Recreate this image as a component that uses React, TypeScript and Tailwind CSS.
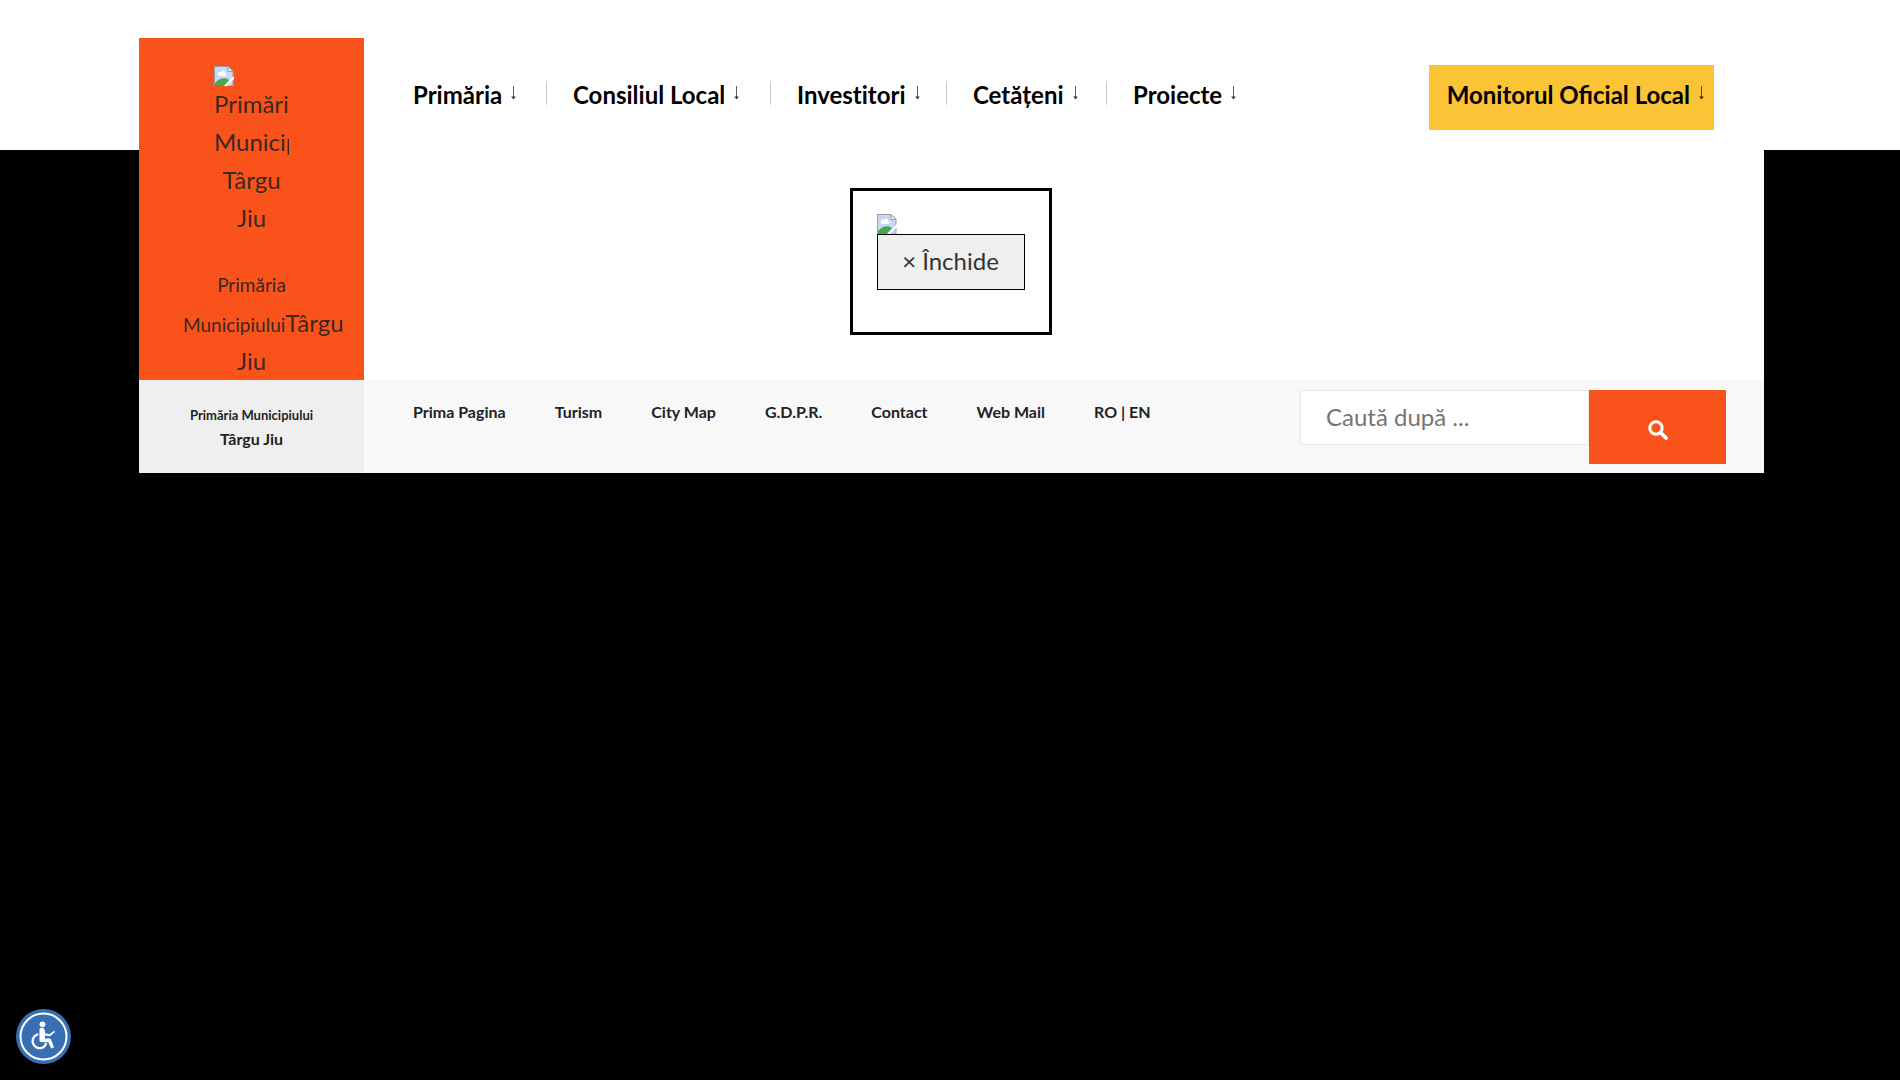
import React from "react";

const mainMenu = [
  { label: "Primăria", width: "w-[133px]" },
  { label: "Consiliul Local", width: "w-[197px]" },
  { label: "Investitori", width: "w-[149px]" },
  { label: "Cetățeni", width: "w-[133px]" },
  { label: "Proiecte", width: "w-[133px]" },
];

const topLinks = ["Prima Pagina", "Turism", "City Map", "G.D.P.R.", "Contact", "Web Mail", "RO | EN"];

const DownArrow = () => (
  <svg className="h-[14px] w-[7px] shrink-0 text-black/70" viewBox="0 0 7 14" fill="none" stroke="currentColor" aria-hidden="true">
    <path d="M3.5 0V12" strokeWidth="0.9" />
    <path d="M1 10.6H6L3.5 13.4Z" fill="currentColor" stroke="none" />
  </svg>
);

// placeholder for a missing image
const BrokenImage = ({ className = "" }) => (
  <svg className={`block h-5 w-5 shrink-0 ${className}`} viewBox="0 0 20 20" aria-hidden="true">
    <path d="M.5 .5H14L19 5.500V20H.5Z" fill="#c6d8f5" stroke="#9a9fa5" strokeWidth="1" />
    <path d="M4 8a2 2 0 0 1 3-2a2 2 0 0 1 4 1a1.500 1.500 0 0 1 0 3H5a1.500 1.500 0 0 1-1-2Z" fill="#fff" />
    <path d="M1 20V17C5 12 11 11 15 14L10 20Z" fill="#4ca64c" />
    <path d="M14 .5V5.500H19Z" fill="#f3f5f8" stroke="#9a9fa5" strokeWidth="1" />
    <path d="M10 20L20 10V13L13 20Z" fill="#fff" />
  </svg>
);

const SearchIcon = () => (
  <svg className="h-5 w-5" viewBox="0 0 20 20" fill="none" stroke="#fff" aria-hidden="true">
    <circle cx="8" cy="8" r="6.2" strokeWidth="3" />
    <path d="M12.500 12.500L18 18" strokeWidth="3.800" strokeLinecap="round" />
  </svg>
);

const AccessibilityButton = () => (
  <button type="button" aria-label="Accesibilitate" className="fixed bottom-4 left-4 h-[55px] w-[55px] cursor-pointer">
    <svg className="h-full w-full" viewBox="0 0 55 55" fill="none">
      <circle cx="27.500" cy="27.500" r="27.500" fill="#366fb4" />
      <circle cx="27.500" cy="27.500" r="23" stroke="#fff" strokeWidth="2" />
      <circle cx="26.500" cy="15.300" r="2.900" fill="#fff" />
      <path d="M23.500 20.500c0-2.200 4.500-2.200 5 0l.8 3.800 4.200 1 4.500-3.500 1 1.100-5 4.300-5-.6v2.900h4.200c1 0 1.500.4 1.900 1.200l3 7.600-3 1.200-2.700-6.300h-6.800c-1.300 0-2.100-.8-2.100-2Z" fill="#fff" />
      <path d="M21.500 25.500a7 7 0 1 0 8.500 9.500" stroke="#fff" strokeWidth="2.200" strokeLinecap="round" />
    </svg>
  </button>
);

const Logo = () => (
  <a href="#" className="flex h-[342px] flex-col items-center bg-[#f9531b] pt-7 text-2xl leading-[38px] text-[#222]/90">
    <span className="flex w-[75px] flex-col overflow-hidden">
      <BrokenImage />
      <span className="-mt-px">Primăria</span>
      <span>Municipiului</span>
      <span className="text-center">Târgu</span>
      <span className="text-center">Jiu</span>
    </span>
    <span className="mt-8 flex w-[137px] flex-col">
      <span className="text-center text-[19px] leading-[38px]">Primăria</span>
      <span className="whitespace-nowrap">
        <span className="text-[19px] leading-none">Municipiului</span>Târgu
      </span>
      <span className="text-center">Jiu</span>
    </span>
  </a>
);

const MainMenu = () => (
  <nav className="flex items-start justify-between pt-[65px] pr-[50px] pl-[49px] text-2xl font-bold text-black">
    <ul className="flex pt-4 [font-variant-ligatures:none]">
      {mainMenu.map((item, i) => (
        <li key={item.label} className={i < mainMenu.length - 1 ? "mr-[26px] h-6 border-r border-[#ccc]" : "h-6"}>
          <a href="#" className={`flex items-start gap-2 leading-7 whitespace-nowrap ${item.width}`}>
            {item.label}
            <span className="pt-[5px]">
              <DownArrow />
            </span>
          </a>
        </li>
      ))}
    </ul>
    <a href="#" className="flex h-[65px] items-start gap-2 bg-[#fbc437] pt-4 pr-[9px] pl-[18px] leading-7 whitespace-nowrap">
      Monitorul Oficial Local
      <span className="pt-[5px]">
        <DownArrow />
      </span>
    </a>
  </nav>
);

const Notice = () => (
  <div className="mt-[58px] mr-[227px] self-center border-[3px] border-black px-6 pt-[23px] pb-[42px]">
    <BrokenImage />
    <button type="button" className="block h-14 w-[148px] cursor-pointer border border-black bg-[#efefef] pb-[2px] text-2xl text-[#333]">
      × Închide
    </button>
  </div>
);

const SearchForm = () => (
  <form className="mr-[38px] flex w-[426px] items-start pt-[10px]" onSubmit={(e) => e.preventDefault()}>
    <input
      type="search"
      aria-label="Caută după"
      placeholder="Caută după ..."
      className="h-[55px] min-w-0 flex-1 border border-[#e8e8e8] bg-white px-[25px] pb-[3px] text-2xl text-[#222] placeholder:text-[#757575]"
    />
    <button type="submit" aria-label="Caută" className="flex h-[74px] w-[137px] cursor-pointer items-center justify-center bg-[#f9531b] pt-[6px]">
      <SearchIcon />
    </button>
  </form>
);

export default function App() {
  return (
    <div className="min-h-screen bg-[linear-gradient(#fff_150px,#000_150px)] font-['Lato',sans-serif]">
      <header className="grid grid-cols-[225px_1fr] pr-[136px] pl-[139px]">
        <div className="pt-[38px]">
          <Logo />
          <div className="flex h-[93px] flex-col items-center bg-[#efefef] pt-[23px] font-bold text-[#222]">
            <span className="text-[13px] leading-6">Primăria Municipiului</span>
            <span className="text-base leading-6">Târgu Jiu</span>
          </div>
        </div>
        <div className="flex flex-col bg-white">
          <MainMenu />
          <Notice />
          <div className="mt-auto flex h-[93px] justify-between bg-[#f8f8f8]">
            <ul className="flex gap-[49px] pt-5 pl-[49px] text-base font-bold whitespace-nowrap text-[#222]">
              {topLinks.map((label) => (
                <li key={label}>
                  <a href="#">{label}</a>
                </li>
              ))}
            </ul>
            <SearchForm />
          </div>
        </div>
      </header>
      <AccessibilityButton />
    </div>
  );
}
